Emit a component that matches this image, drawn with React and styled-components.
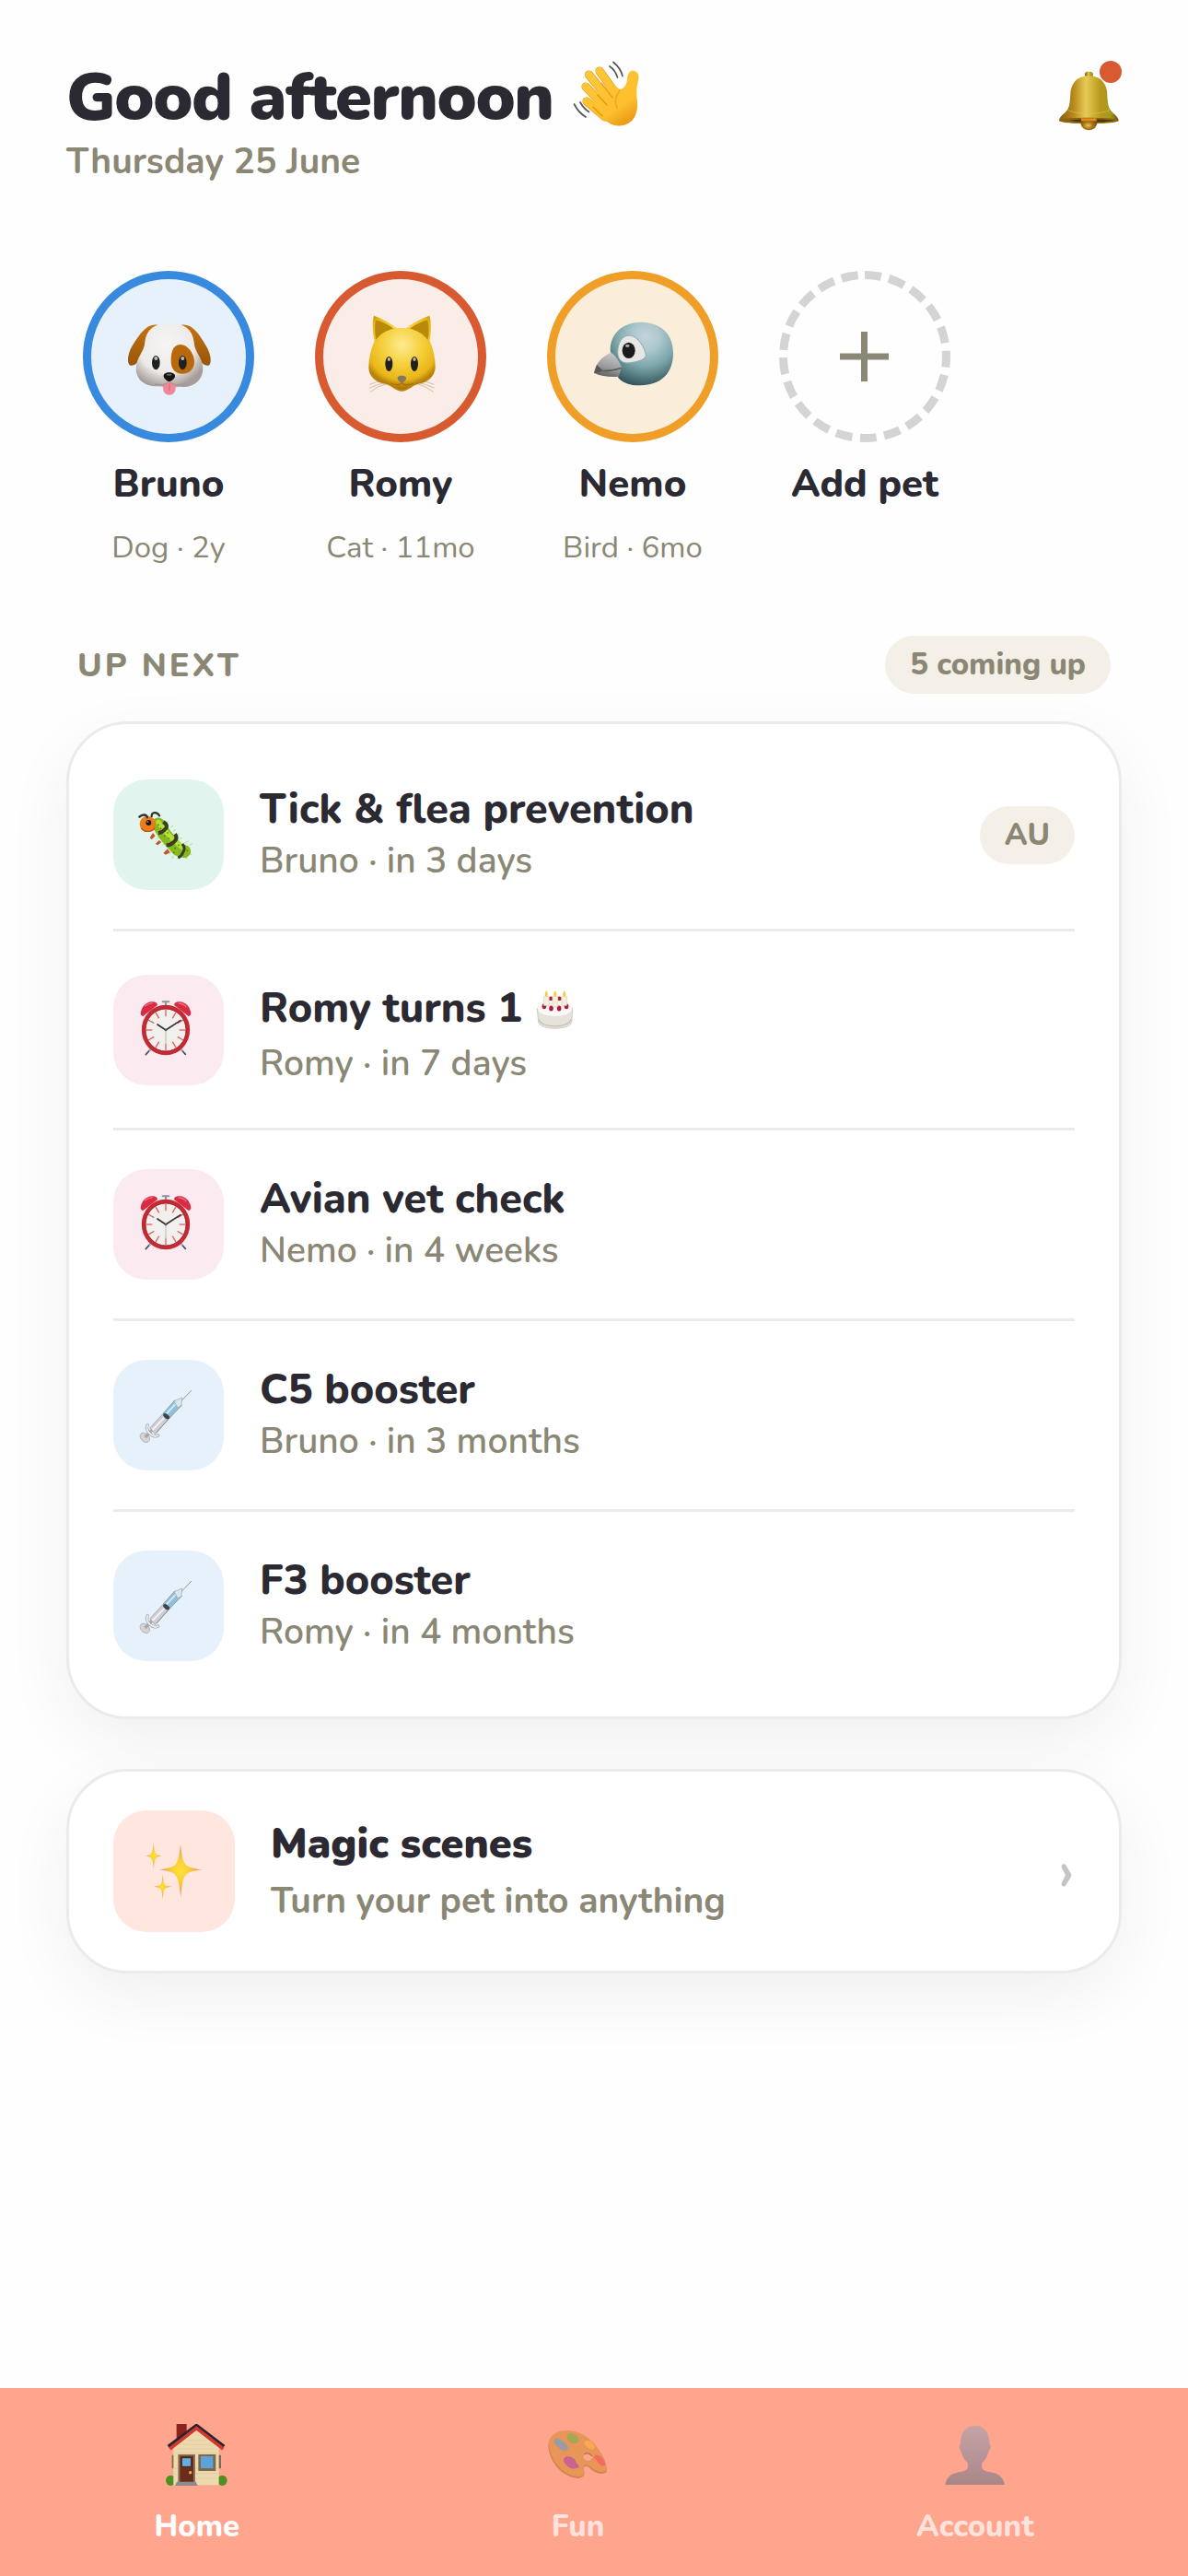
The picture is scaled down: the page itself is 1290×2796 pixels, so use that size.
import { useState } from 'react'
import styled, { createGlobalStyle } from 'styled-components'

const colors = {
    page: '#fefefe',
    ink: '#2b2932',
    muted: '#8a8775',
    line: '#ebebeb',
    sand: '#f4efe7',
    coral: '#ffa58e',
    alert: '#d85a30',
}

const GlobalStyle = createGlobalStyle`
    * {
        box-sizing: border-box;
    }
    body {
        margin: 0;
        background: ${colors.page};
        color: ${colors.ink};
        font-family: Nunito, Lato, 'Open Sans', sans-serif;
    }
    button {
        padding: 0;
        border: 0;
        background: none;
        color: inherit;
        font: inherit;
        cursor: pointer;
    }
    a {
        color: inherit;
        text-decoration: none;
    }
    h1, h2, h3, p, ul {
        margin: 0;
        padding: 0;
    }
    svg {
        flex: none;
        overflow: visible;
    }
`

const Page = styled.div`
    display: flex;
    flex-direction: column;
    min-height: 100vh;
`
const Content = styled.main`
    display: flex;
    flex-direction: column;
    flex: 1;
    padding: 60px 72px 72px;
`
const Header = styled.header`
    display: flex;
    justify-content: space-between;
    align-items: flex-start;
`
const Greeting = styled.h1`
    display: flex;
    align-items: center;
    gap: 18px;
    font-size: 72px;
    line-height: 90px;
    font-weight: 900;
    letter-spacing: -0.02em;
`
const Today = styled.p`
    margin-top: 2px;
    font-size: 39px;
    line-height: 48px;
    font-weight: 700;
    color: ${colors.muted};
`
const BellButton = styled.button`
    position: relative;
    display: flex;
    margin-top: 6px;
    padding-top: 10px;
`
const AlertDot = styled.span`
    position: absolute;
    top: 0;
    right: 0;
    width: 24px;
    height: 24px;
    border-radius: 50%;
    background: ${colors.alert};
`
const PetList = styled.ul`
    display: flex;
    gap: 30px;
    margin-top: 94px;
    list-style: none;
`
const PetButton = styled.button`
    display: flex;
    flex-direction: column;
    align-items: center;
    width: 222px;
`
const Avatar = styled.span`
    display: flex;
    align-items: center;
    justify-content: center;
    width: 186px;
    height: 186px;
    border: ${({ $ring }) => ($ring ? `9px solid ${$ring}` : '0')};
    border-radius: 50%;
    background: ${({ $fill }) => $fill || 'transparent'};
`
const PetName = styled.span`
    margin-top: 18px;
    font-size: 42px;
    line-height: 56px;
    font-weight: 800;
`
const PetInfo = styled.span`
    margin-top: 18px;
    font-size: 33px;
    line-height: 46px;
    color: ${colors.muted};
`
const SectionHead = styled.div`
    display: flex;
    justify-content: space-between;
    align-items: center;
    margin: 72px 0 30px;
    padding: 0 12px;
`
const SectionTitle = styled.h2`
    padding-top: 3px;
    font-size: 36px;
    line-height: 48px;
    font-weight: 800;
    letter-spacing: 3px;
    color: ${colors.muted};
`
const Pill = styled.span`
    padding: 9px 27px;
    border-radius: 32px;
    background: ${colors.sand};
    font-size: 33px;
    line-height: 45px;
    font-weight: 800;
    color: ${colors.muted};
`
const Card = styled.section`
    padding: ${({ $pad }) => $pad};
    border: 3px solid ${colors.line};
    border-radius: 66px;
    background: #fff;
    box-shadow: 0 24px 72px rgba(0, 0, 0, 0.06);
`
const TaskList = styled.ul`
    list-style: none;
`
const TaskRow = styled.li`
    display: flex;
    align-items: center;
    gap: 39px;
    padding: 42px 0;

    & + & {
        border-top: 3px solid ${colors.line};
    }
`
const Tile = styled.span`
    display: flex;
    align-items: center;
    justify-content: center;
    flex: none;
    width: ${({ $size }) => $size}px;
    height: ${({ $size }) => $size}px;
    border-radius: 36px;
    background: ${({ $fill }) => $fill};
`
const TaskText = styled.div`
    flex: 1;
`
const TaskTitle = styled.h3`
    display: flex;
    align-items: center;
    gap: 15px;
    padding-top: ${({ $tall }) => ($tall ? 9 : 0)}px;
    font-size: 45px;
    line-height: ${({ $tall }) => ($tall ? 66 : 58)}px;
    font-weight: 800;
`
const TaskWhen = styled.p`
    font-size: 39px;
    line-height: 54px;
    font-weight: 600;
    color: ${colors.muted};
`
const MagicLink = styled.a`
    display: flex;
    align-items: center;
    gap: 39px;
`
const MagicText = styled.div`
    display: flex;
    flex-direction: column;
    flex: 1;
    gap: 8px;
    padding-top: 3px;
`
const MagicTitle = styled.h3`
    font-size: 45px;
    line-height: 54px;
    font-weight: 900;
`
const MagicHint = styled.p`
    font-size: 39px;
    line-height: 54px;
    font-weight: 700;
    color: ${colors.muted};
`
const Chevron = styled.span`
    font-size: 66px;
    line-height: 54px;
    font-weight: 600;
    color: #c4c4c4;
`
const Cards = styled.div`
    display: flex;
    flex-direction: column;
    gap: 54px;
`
const TabBar = styled.nav`
    display: flex;
    justify-content: space-around;
    padding: 36px 0 32px;
    background: ${colors.coral};
`
const Tab = styled.button`
    display: flex;
    flex-direction: column;
    align-items: center;
    gap: 22px;
    font-size: 33px;
    line-height: 42px;
    font-weight: 800;
    color: ${({ $active }) => ($active ? '#fff' : 'rgba(255, 255, 255, 0.7)')};

    svg {
        opacity: ${({ $active }) => ($active ? 1 : 0.6)};
    }
`
const TabIcon = styled.span`
    display: flex;
    align-items: center;
    justify-content: center;
    height: 72px;
`

function Wave() {
    return (
        <svg width="76" height="76" viewBox="0 3 76 76" role="img" aria-label="Waving hand">
            <defs>
                <linearGradient id="wave" gradientUnits="userSpaceOnUse" x1="20" y1="10" x2="62" y2="74">
                    <stop offset="0" stopColor="#ffc83a" />
                    <stop offset="0.7" stopColor="#fdbf2d" />
                    <stop offset="1" stopColor="#e59312" />
                </linearGradient>
            </defs>
            <g stroke="#e09a1c" strokeWidth="9.2" strokeLinecap="round">
                <path d="M32 13L52 41M20.5 17L44 46M17 30L40 54M18 46L38 63" />
            </g>
            <path d="M46 27L54 33C60 32 62 26 62 21C63 14 66 12 70 13C75 15 75 19 74 24C72 32 72 37 73 46C74 62 67 72.5 52 72.5C45 72 41 69 36 65L22 49L30 35Z" fill="url(#wave)" />
            <g stroke="url(#wave)" strokeWidth="8" strokeLinecap="round">
                <path d="M32 13L52 41M20.5 17L44 46M17 30L40 54M18 46L38 63" />
            </g>
            <path d="M30 39L40 50M34 26L46 42M25 52L35 62" stroke="#dd9414" strokeWidth="1.2" fill="none" strokeLinecap="round" />
            <path d="M54 34C49 41 48 47 51 54" stroke="#eba725" strokeWidth="1.5" fill="none" strokeLinecap="round" />
            <g stroke="#555" strokeWidth="1.7" fill="none" strokeLinecap="round">
                <path d="M43 8Q49 12 51.5 20M47 3.5Q55 10 57 18.5M4.5 49Q9 58 17 63M11 47Q15 54 20.5 57.5" />
            </g>
        </svg>
    )
}

function Bell() {
    return (
        <svg width="69" height="66" viewBox="87 78 207 198" role="img" aria-label="Notifications">
            <defs>
                <linearGradient id="bell" x1="0" y1="0" x2="1" y2="0">
                    <stop offset="0" stopColor="#8a5d0c" />
                    <stop offset="0.25" stopColor="#b98a1c" />
                    <stop offset="0.45" stopColor="#e6cb55" />
                    <stop offset="0.7" stopColor="#b8981d" />
                    <stop offset="0.86" stopColor="#a39a1e" />
                    <stop offset="1" stopColor="#6f4e0b" />
                </linearGradient>
                <radialGradient id="clapper" cx="0.45" cy="0.6" r="0.6">
                    <stop offset="0" stopColor="#e6c25d" />
                    <stop offset="0.5" stopColor="#a87414" />
                    <stop offset="1" stopColor="#6b4a0b" />
                </radialGradient>
            </defs>
            <rect x="174" y="83" width="26" height="20" rx="9" fill="url(#bell)" />
            <path d="M187 97C153 97 134 116 128 145C125 172 127 192 117 208C108 221 92 228 90 242C92 256 282 256 284 242C282 228 266 221 257 208C247 192 248 172 246 145C240 116 221 97 187 97Z" fill="url(#bell)" />
            <path d="M90 241C110 231 264 231 284 241C282 256 92 256 90 241Z" fill="#8a6410" />
            <path d="M124 242C150 237 224 237 270 242C240 249 150 250 124 242Z" fill="#4d350a" />
            <path d="M119 208C145 224 229 224 255 208" stroke="#e2c548" strokeWidth="3" opacity="0.6" fill="none" />
            <path d="M160 236H214V248C212 282 162 282 160 248Z" fill="url(#clapper)" />
            <rect x="162" y="235" width="50" height="9" fill="#e28c1b" />
        </svg>
    )
}

function Dog() {
    return (
        <svg width="93" height="93" viewBox="199 181 279 279" aria-hidden="true">
            <defs>
                <radialGradient id="dogFace" gradientUnits="userSpaceOnUse" cx="330" cy="280" r="140">
                    <stop offset="0" stopColor="#f6f5f3" />
                    <stop offset="0.65" stopColor="#edebe9" />
                    <stop offset="1" stopColor="#a79d98" />
                </radialGradient>
                <linearGradient id="dogEar" x1="0" y1="0" x2="0" y2="1">
                    <stop offset="0" stopColor="#c4730f" />
                    <stop offset="1" stopColor="#98560a" />
                </linearGradient>
            </defs>
            <path d="M302 216C270 210 247 238 220 282C203 308 200 345 214 348C238 350 240 320 268 300Z" fill="url(#dogEar)" />
            <path d="M378 216C410 210 433 238 458 282C476 310 480 345 466 348C442 350 440 320 412 300Z" fill="url(#dogEar)" />
            <path d="M340 210C290 210 264 232 260 272C258 305 231 322 231 358C231 395 262 417 300 416C320 415 325 422 340 422C356 422 360 415 380 418C420 420 449 395 449 358C449 322 421 305 420 272C416 232 390 210 340 210Z" fill="url(#dogFace)" />
            <path d="M375 280C350 282 346 305 345 330C344 362 362 376 384 375C408 374 422 356 421 333C420 308 398 279 375 280Z" fill="#b9690c" />
            <ellipse cx="296" cy="339" rx="13" ry="23" fill="#202020" />
            <ellipse cx="383" cy="339" rx="13" ry="23" fill="#202020" />
            <ellipse cx="296" cy="325" rx="6" ry="6" fill="#bbb" />
            <ellipse cx="383" cy="325" rx="6" ry="6" fill="#bbb" />
            <path d="M319 409C328 408 334 403 339 400C345 403 352 408 361 409C360 430 358 444 340 444C322 444 318 430 319 409Z" fill="#f0889a" />
            <path d="M340 407V430" stroke="#d5637a" strokeWidth="3" />
            <path d="M292 408C318 416 334 408 339 397C345 408 362 416 388 408" stroke="#9d928c" strokeWidth="3" fill="none" />
            <path d="M339 371C327 371 320 376 321 384C323 392 334 400 339 400C345 400 356 392 358 384C359 376 351 371 339 371Z" fill="#151515" />
            <ellipse cx="339" cy="378" rx="9" ry="3" fill="#666" />
        </svg>
    )
}

function Cat() {
    return (
        <svg width="93" height="93" viewBox="955 181 279 279" aria-hidden="true">
            <defs>
                <radialGradient id="catFace" gradientUnits="userSpaceOnUse" cx="1098" cy="280" r="135">
                    <stop offset="0" stopColor="#fdeb91" />
                    <stop offset="0.5" stopColor="#f5cf3a" />
                    <stop offset="0.85" stopColor="#e9b618" />
                    <stop offset="1" stopColor="#b98208" />
                </radialGradient>
            </defs>
            <path d="M1006 186C1030 194 1055 208 1080 226L1112 226C1136 208 1162 194 1187 186C1194 210 1192 240 1188 268C1200 295 1206 325 1206 355C1204 384 1182 404 1150 408C1130 414 1115 432 1097 432C1079 432 1064 414 1044 408C1012 404 990 384 989 355C989 325 996 295 1008 268C1002 240 1000 210 1006 186Z" fill="url(#catFace)" />
            <path d="M1012 200C1032 204 1052 216 1070 228C1044 234 1026 246 1013 264C1009 244 1008 218 1012 200Z" fill="#b98a07" />
            <path d="M1181 200C1161 204 1141 216 1123 228C1149 234 1167 246 1181 264C1187 244 1185 218 1181 200Z" fill="#b98a07" />
            <ellipse cx="1055" cy="343" rx="12" ry="24" fill="#202020" />
            <ellipse cx="1138" cy="343" rx="12" ry="24" fill="#202020" />
            <ellipse cx="1055" cy="328" rx="5" ry="6" fill="#c5b787" />
            <ellipse cx="1138" cy="328" rx="5" ry="6" fill="#c5b787" />
            <path d="M1097 381C1088 381 1082 384 1083 391C1085 398 1092 404 1097 404C1102 404 1109 398 1111 391C1112 384 1106 381 1097 381Z" fill="#85765f" />
            <path d="M1060 406C1078 413 1090 414 1097 404C1104 414 1118 413 1136 406M1082 419Q1097 426 1112 419" stroke="#a3740c" strokeWidth="4" fill="none" />
            <g stroke="#9a7a3a" strokeWidth="1.2" fill="none">
                <path d="M1050 396Q1015 398 992 410M1052 402Q1018 408 991 422M1054 406Q1018 414 994 434M1144 396Q1178 398 1202 410M1142 402Q1176 408 1203 422M1140 406Q1174 414 1200 434" />
            </g>
        </svg>
    )
}

function Bird() {
    return (
        <svg width="93" height="93" viewBox="241 181 279 279" aria-hidden="true">
            <defs>
                <radialGradient id="birdHead" gradientUnits="userSpaceOnUse" cx="422" cy="255" r="162">
                    <stop offset="0" stopColor="#c3d3da" />
                    <stop offset="0.28" stopColor="#adc8cd" />
                    <stop offset="0.6" stopColor="#7ba7aa" />
                    <stop offset="1" stopColor="#32545a" />
                </radialGradient>
                <linearGradient id="beak" x1="0.6" y1="0" x2="0.3" y2="1">
                    <stop offset="0" stopColor="#c9c9c9" />
                    <stop offset="0.6" stopColor="#999" />
                    <stop offset="1" stopColor="#5a5a5a" />
                </linearGradient>
            </defs>
            <path d="M408 207C345 207 306 244 306 300L332 388C350 408 376 414 405 413C470 412 511 375 511 308C511 245 470 208 408 207Z" fill="url(#birdHead)" />
            <path d="M308 306C280 318 258 340 253 372C276 384 310 387 334 384L343 352C332 330 322 314 308 306Z" fill="url(#beak)" />
            <path d="M262 346L283 366L254 374Z" fill="#555" />
            <path d="M283 366C305 366 325 362 342 356" stroke="#555" strokeWidth="4" fill="none" />
            <path d="M370 250C342 250 330 276 330 306C330 328 344 340 362 340C390 338 420 330 422 316C420 292 396 252 370 250Z" fill="#e6e6e5" stroke="#8ca5a8" strokeWidth="3" />
            <ellipse cx="366" cy="299" rx="21" ry="26" fill="#1b1b1b" />
            <ellipse cx="362" cy="284" rx="7" ry="5" fill="#aaa" />
        </svg>
    )
}

function AddRing() {
    return (
        <svg width="186" height="186" viewBox="0 0 186 186" fill="none" aria-hidden="true">
            <circle cx="93" cy="93" r="88.5" stroke="#d4d4d6" strokeWidth="9" strokeDasharray="18 8.48" transform="rotate(-90 93 93)" />
            <path d="M66 93H119M92.5 66V120" stroke={colors.muted} strokeWidth="7" />
        </svg>
    )
}

function Caterpillar() {
    return (
        <svg width="64" height="64" viewBox="123 132 192 192" aria-hidden="true">
            <g stroke="#9ccc4a" strokeWidth="2">
                <path d="M212 190L218 182M226 205L234 198M234 216L243 210M244 232L254 224M254 244L264 237M272 256L284 248M286 262L297 256M208 258L200 262M226 286L220 292M236 296L230 306M276 300L280 308M186 236L180 242M288 290L296 294" />
            </g>
            <path d="M168 222L158 238L164 244L176 232ZM188 246L176 258L184 262L196 252ZM216 274L202 288L210 293L224 286Z" fill="#c5542a" />
            <path d="M186 194L206 226L228 252L250 276L270 282" stroke="#86b91c" strokeWidth="43" strokeLinecap="round" strokeLinejoin="round" fill="none" />
            <path d="M186 188L208 216L234 244L262 268" stroke="#b6df3b" strokeWidth="16" strokeLinecap="round" strokeLinejoin="round" fill="none" />
            <path d="M202 186C214 194 216 202 210 208C205 214 196 222 186 223" stroke="#3a3d24" strokeWidth="12" fill="none" />
            <path d="M240 226C248 236 246 244 236 252C230 258 222 262 212 262" stroke="#3a3d24" strokeWidth="12" fill="none" />
            <path d="M264 258C272 268 272 278 266 286C263 294 258 300 250 303" stroke="#3a3d24" strokeWidth="9" fill="none" />
            <g fill="#4d6d1c">
                <circle cx="206" cy="232" r="2.5" /><circle cx="216" cy="222" r="2.5" /><circle cx="220" cy="240" r="2.5" />
                <circle cx="240" cy="272" r="2.5" /><circle cx="252" cy="262" r="2.5" /><circle cx="236" cy="286" r="2.5" />
                <circle cx="186" cy="196" r="2.5" /><circle cx="194" cy="208" r="2.5" /><circle cx="280" cy="280" r="2.5" />
            </g>
            <circle cx="151" cy="193" r="26" fill="#ec7d1d" />
            <path d="M130 207C142 222 166 220 174 205" stroke="#c94f12" strokeWidth="4" fill="none" />
            <circle cx="154" cy="189" r="9" fill="#1b1b1b" />
            <circle cx="151" cy="186" r="3" fill="#888" />
            <path d="M150 172C148 162 134 160 124 170M164 168C162 154 182 152 189 166" stroke="#333" strokeWidth="7" fill="none" strokeLinecap="round" />
        </svg>
    )
}

const ticks = [0, 30, 60, 90, 120, 150, 180, 210, 240, 270, 300, 330]

function AlarmClock() {
    return (
        <svg width="64" height="64" viewBox="116 141 192 192" aria-hidden="true">
            <path d="M158 294L138 317M248 294L267 316" stroke="#4a4f59" strokeWidth="5" strokeLinecap="round" />
            <path d="M162 292L150 306M244 292L257 306" stroke="#a9b8c8" strokeWidth="6" />
            <path d="M203 144V160M193 145H213" stroke="#8c949c" strokeWidth="6" strokeLinecap="round" />
            <path d="M121 186C120 160 148 134 174 149L176 156L128 193Z" fill="#d92b44" />
            <path d="M285 186C286 160 258 134 232 149L230 156L278 193Z" fill="#d92b44" />
            <path d="M134 160Q146 150 160 149M244 150Q260 150 270 162" stroke="#ef7382" strokeWidth="4" fill="none" />
            <ellipse cx="203" cy="237" rx="72" ry="75" fill="#f1f0ee" stroke="#c32a33" strokeWidth="13" />
            <ellipse cx="203" cy="237" rx="66" ry="69" fill="none" stroke="#8d1420" strokeWidth="2" />
            {ticks.map((angle) => (
                <path key={angle} d="M203 171V193" stroke="#ea5f5c" strokeWidth="4" transform={`rotate(${angle} 203 237)`} />
            ))}
            <path d="M203 237V284" stroke="#c7b49c" strokeWidth="3" />
            <path d="M203 237L176 219M203 237L251 206" stroke="#333" strokeWidth="5" strokeLinecap="round" />
            <circle cx="203" cy="237" r="4" fill="#555" />
        </svg>
    )
}

function Cake() {
    return (
        <svg width="41" height="43" viewBox="1368 100 122 130" role="img" aria-label="Birthday cake">
            <path d="M1371 165C1371 142 1487 142 1487 165L1484 206C1480 235 1378 235 1375 206Z" fill="#e6e3dc" stroke="#bdb7aa" strokeWidth="2" />
            <path d="M1377 198C1382 228 1476 228 1482 198" stroke="#c6bfaf" strokeWidth="4" fill="none" />
            <ellipse cx="1429" cy="163" rx="56" ry="25" fill="#faf9f6" />
            <g fill="#b3193c">
                <circle cx="1416" cy="130" r="7" /><circle cx="1444" cy="130" r="7" />
                <ellipse cx="1394" cy="155" rx="7" ry="9" /><ellipse cx="1417" cy="162" rx="7" ry="9" />
                <ellipse cx="1443" cy="162" rx="7" ry="9" /><ellipse cx="1467" cy="155" rx="7" ry="9" />
            </g>
            <g fill="#f4efdd" stroke="#c9c2ad" strokeWidth="1.5">
                <rect x="1392" y="122" width="18" height="31" rx="3" />
                <rect x="1421" y="122" width="18" height="35" rx="3" />
                <rect x="1451" y="122" width="18" height="31" rx="3" />
            </g>
            <path d="M1401 103Q1392 120 1401 124Q1410 120 1401 103M1430 103Q1421 120 1430 124Q1439 120 1430 103M1460 103Q1451 120 1460 124Q1469 120 1460 103" fill="#f3cc37" />
        </svg>
    )
}

function Syringe() {
    return (
        <svg width="64" height="64" viewBox="116 102 192 192" aria-hidden="true">
            <path d="M286 118L250 156" stroke="#8d999f" strokeWidth="3" strokeLinecap="round" />
            <ellipse cx="135" cy="271" rx="13" ry="18" transform="rotate(-45 135 271)" fill="#d4d4d8" stroke="#a6a6aa" strokeWidth="2" />
            <path d="M136 270L160 244" stroke="#aaa8aa" strokeWidth="10" />
            <path d="M151 240L196 191L215 207L168 260Z" fill="#cfcdd2" stroke="#9a9aa0" strokeWidth="2" />
            <path d="M160 246L202 202" stroke="#f1f0f2" strokeWidth="6" />
            <path d="M172 256L211 212" stroke="#8d8b93" strokeWidth="3" />
            <path d="M195 192L232 150L255 166L214 209Z" fill="#91bfd8" stroke="#85a5a9" strokeWidth="3" />
            <path d="M205 194L238 158" stroke="#d0ebf5" strokeWidth="6" />
            <path d="M230 152L256 141L254 166L242 174Z" fill="#d9e7ea" stroke="#8fa6a9" strokeWidth="2" />
            <ellipse cx="205" cy="202" rx="12" ry="7" transform="rotate(38 205 202)" fill="#3b4450" />
            <path d="M144 230C134 248 160 274 178 264" stroke="#9fa0a4" strokeWidth="10" strokeLinecap="round" fill="none" />
            <path d="M144 230C134 248 160 274 178 264" stroke="#ececef" strokeWidth="6" strokeLinecap="round" fill="none" />
        </svg>
    )
}

function Sparkles() {
    return (
        <svg width="64" height="64" viewBox="141 147 192 192" aria-hidden="true">
            <defs>
                <radialGradient id="spark">
                    <stop offset="0" stopColor="#fde03a" />
                    <stop offset="0.4" stopColor="#fbcf38" />
                    <stop offset="1" stopColor="#f08a4c" />
                </radialGradient>
            </defs>
            <g fill="url(#spark)">
                <path d="M258 156C262 190 264 212 278 224C290 233 308 235 328 238C308 241 290 243 278 252C264 264 262 294 259 328C255 294 252 264 238 252C226 243 208 241 188 238C208 235 226 233 238 224C252 212 254 190 258 156Z" />
                <path d="M170 151C172 174 174 184 180 188C186 191 190 192 199 193C190 194 186 195 180 199C174 204 172 214 171 236C169 214 166 204 160 199C155 195 150 194 142 193C150 192 155 191 160 188C166 184 168 174 170 151Z" />
                <path d="M200 254C202 274 203 284 209 288C215 291 220 292 230 293C220 294 215 295 209 299C203 304 202 314 200 334C198 314 197 304 191 299C185 295 180 294 170 293C180 292 185 291 191 288C197 284 198 274 200 254Z" />
            </g>
        </svg>
    )
}

function House() {
    return (
        <svg width="67" height="69" viewBox="0 0 201 207" aria-hidden="true">
            <ellipse cx="16" cy="187" rx="16" ry="17" fill="#4f8f22" />
            <ellipse cx="184" cy="187" rx="16" ry="17" fill="#4f8f22" />
            <path d="M35 3H68V30L35 64Z" fill="#8e231d" />
            <path d="M25 75L99 22L173 75V202H25Z" fill="#ecd9ae" />
            <g stroke="#dac594" strokeWidth="1.5">
                <path d="M68 56H130M54 70H146M38 84H160M28 98H172M28 148H172M90 164H172M90 180H172" />
            </g>
            <path d="M8 76L100 7L190 76" stroke="#28262c" strokeWidth="10" fill="none" strokeLinejoin="bevel" />
            <path d="M13 84L100 17L187 84" stroke="#d03830" strokeWidth="11" fill="none" />
            <path d="M40 102H96V200H40Z" fill="#8a7458" />
            <path d="M46 107H90V192H46Z" fill="#6b2d1b" />
            <path d="M52 113H83V142H52Z" fill="#65aedd" stroke="#3e2116" strokeWidth="3" />
            <circle cx="80" cy="161" r="5" fill="#eab749" />
            <path d="M106 102H163V156H106Z" fill="#80684d" />
            <path d="M114 108H154V147H114Z" fill="#5ba4da" />
            <path d="M173 104H180V148H173ZM20 104H25V148H20Z" fill="#806a54" />
            <path d="M36 191H98L104 204H30Z" fill="#8c8b8b" />
        </svg>
    )
}

function Palette() {
    return (
        <svg width="65" height="52" viewBox="0 0 195 156" aria-hidden="true">
            <path d="M56 3C18 6 2 26 1 52C4 98 42 152 98 156C118 154 122 144 116 128C114 116 124 112 136 122C150 136 176 148 190 136C200 110 160 44 118 20C98 8 76 2 56 3Z" fill="#b96c26" />
            <path d="M56 0C20 2 2 22 2 46C6 92 44 146 98 151C118 148 122 140 116 124C114 110 126 108 138 118C152 132 178 142 190 130C198 106 160 40 118 16C98 4 76 -1 56 0Z" fill="#d98b35" />
            <ellipse cx="130" cy="86" rx="15" ry="12" fill="#ffa58e" />
            <path d="M118 78Q132 68 144 84" stroke="#8d5420" strokeWidth="4" fill="none" />
            <path d="M66 10C78 4 100 16 101 32C100 44 78 46 66 34C60 24 60 16 66 10Z" fill="#6da82d" />
            <path d="M24 26C36 22 64 42 66 58C62 72 44 68 36 56C22 48 16 34 24 26Z" fill="#5996b3" />
            <path d="M122 34C136 30 152 42 152 56C144 68 130 60 126 52C118 48 116 38 122 34Z" fill="#f1ad29" />
            <path d="M154 80C168 76 190 98 186 114C176 120 160 106 158 96C150 92 148 84 154 80Z" fill="#f0473f" />
            <path d="M58 86C70 82 90 90 92 106C104 116 104 124 92 122C78 130 64 118 56 108C48 100 50 90 58 86Z" fill="#a83795" />
        </svg>
    )
}

function Person() {
    return (
        <svg width="65" height="65" viewBox="376 158 196 196" aria-hidden="true">
            <defs>
                <linearGradient id="person" x1="0" y1="0" x2="0" y2="1">
                    <stop offset="0" stopColor="#a1a4b6" />
                    <stop offset="1" stopColor="#717282" />
                </linearGradient>
            </defs>
            <path d="M475 160C444 160 427 184 427 220C422 224 422 238 428 242C433 262 442 275 451 283V297C449 307 436 311 418 313C394 318 380 332 377 354H572C569 332 554 318 530 313C512 311 499 307 497 297V283C507 275 516 262 520 242C527 238 527 224 522 220C523 184 506 160 475 160Z" fill="url(#person)" />
        </svg>
    )
}

const pets = [
    { name: 'Bruno', info: 'Dog · 2y', ring: '#378add', fill: '#e6f1fb', icon: <Dog /> },
    { name: 'Romy', info: 'Cat · 11mo', ring: '#d85a30', fill: '#faece7', icon: <Cat /> },
    { name: 'Nemo', info: 'Bird · 6mo', ring: '#ef9f27', fill: '#faeeda', icon: <Bird /> },
]

const tasks = [
    { title: 'Tick & flea prevention', when: 'Bruno · in 3 days', fill: '#e1f5ee', icon: <Caterpillar />, tag: 'AU' },
    { title: 'Romy turns 1', when: 'Romy · in 7 days', fill: '#fbeaf0', icon: <AlarmClock />, badge: <Cake /> },
    { title: 'Avian vet check', when: 'Nemo · in 4 weeks', fill: '#fbeaf0', icon: <AlarmClock /> },
    { title: 'C5 booster', when: 'Bruno · in 3 months', fill: '#e6f1fb', icon: <Syringe /> },
    { title: 'F3 booster', when: 'Romy · in 4 months', fill: '#e6f1fb', icon: <Syringe /> },
]

const tabs = [
    { label: 'Home', icon: <House /> },
    { label: 'Fun', icon: <Palette /> },
    { label: 'Account', icon: <Person /> },
]

function App() {
    const [activeTab, setActiveTab] = useState('Home')

    return (
        <Page>
            <GlobalStyle />
            <Content>
                <Header>
                    <div>
                        <Greeting>Good afternoon <Wave /></Greeting>
                        <Today>Thursday 25 June</Today>
                    </div>
                    <BellButton type="button">
                        <Bell />
                        <AlertDot />
                    </BellButton>
                </Header>

                <PetList>
                    {pets.map((pet) => (
                        <li key={pet.name}>
                            <PetButton type="button">
                                <Avatar $ring={pet.ring} $fill={pet.fill}>{pet.icon}</Avatar>
                                <PetName>{pet.name}</PetName>
                                <PetInfo>{pet.info}</PetInfo>
                            </PetButton>
                        </li>
                    ))}
                    <li>
                        <PetButton type="button">
                            <Avatar><AddRing /></Avatar>
                            <PetName>Add pet</PetName>
                        </PetButton>
                    </li>
                </PetList>

                <SectionHead>
                    <SectionTitle>UP NEXT</SectionTitle>
                    <Pill>5 coming up</Pill>
                </SectionHead>

                <Cards>
                    <Card $pad="18px 48px">
                        <TaskList>
                            {tasks.map((task) => (
                                <TaskRow key={task.title}>
                                    <Tile $size={120} $fill={task.fill}>{task.icon}</Tile>
                                    <TaskText>
                                        <TaskTitle $tall={Boolean(task.badge)}>{task.title}{task.badge}</TaskTitle>
                                        <TaskWhen>{task.when}</TaskWhen>
                                    </TaskText>
                                    {task.tag && <Pill>{task.tag}</Pill>}
                                </TaskRow>
                            ))}
                        </TaskList>
                    </Card>

                    <Card $pad="42px 48px">
                        <MagicLink href="#magic">
                            <Tile $size={132} $fill="#ffe6df"><Sparkles /></Tile>
                            <MagicText>
                                <MagicTitle>Magic scenes</MagicTitle>
                                <MagicHint>Turn your pet into anything</MagicHint>
                            </MagicText>
                            <Chevron>›</Chevron>
                        </MagicLink>
                    </Card>
                </Cards>
            </Content>

            <TabBar>
                {tabs.map((tab) => (
                    <Tab
                        key={tab.label}
                        type="button"
                        $active={tab.label === activeTab}
                        onClick={() => setActiveTab(tab.label)}
                    >
                        <TabIcon>{tab.icon}</TabIcon>
                        {tab.label}
                    </Tab>
                ))}
            </TabBar>
        </Page>
    )
}

export default App
